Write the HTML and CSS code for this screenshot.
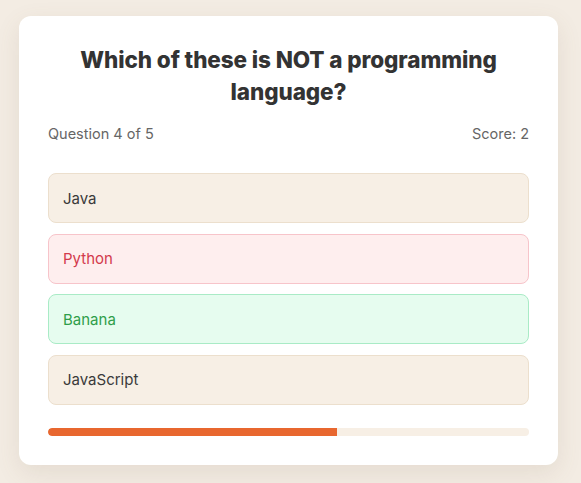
FILE: index.html
```html
<!DOCTYPE html>
<html>
<head>
<meta charset="utf-8">
<link rel="stylesheet" href="styles.css">
</head>
<body>
<div class="card">
  <h1 class="question">Which of these is NOT a programming language?</h1>
  <div class="meta">
    <span>Question 4 of 5</span>
    <span>Score: 2</span>
  </div>
  <div class="options">
    <div class="option">Java</div>
    <div class="option wrong">Python</div>
    <div class="option correct">Banana</div>
    <div class="option">JavaScript</div>
  </div>
  <div class="progress"><div class="fill" style="width:60%"></div></div>
</div>
</body>
</html>
```
FILE: styles.css
```css
html, body { margin: 0; padding: 0; }
body {
  background: #f3ece3;
  font-family: "Inter", "Noto Sans", sans-serif;
  width: 581px;
  height: 483px;
  overflow: hidden;
}
.card {
  box-sizing: border-box;
  margin: 16px 0 0 19px;
  width: 539px;
  height: 449px;
  background: #ffffff;
  border-radius: 12px;
  box-shadow: 0 8px 24px rgba(120, 100, 70, 0.12);
  padding: 28px 29px 30px;
}
.question {
  margin: 0 auto;
  font-size: 22.5px;
  line-height: 32px;
  font-weight: 800;
  color: #333333;
  text-align: center;
  letter-spacing: -0.1px;
  width: 440px;
}
.meta {
  display: flex;
  justify-content: space-between;
  margin-top: 16px;
  font-size: 14.5px;
  line-height: 20px;
  color: #666666;
}
.options {
  display: flex;
  flex-direction: column;
  gap: 10.5px;
  margin-top: 29px;
}
.option {
  box-sizing: border-box;
  height: 50px;
  display: flex;
  align-items: center;
  padding-left: 14px;
  border: 1.5px solid #ecdfcd;
  background: #f7efe5;
  border-radius: 8px;
  font-size: 15px;
  color: #3a3a3a;
}
.option.wrong {
  background: #feeeee;
  border-color: #f7c4ca;
  color: #d33a4c;
}
.option.correct {
  background: #e6fcef;
  border-color: #a9ebc6;
  color: #2f9e4a;
}
.progress {
  margin-top: 23px;
  height: 8px;
  background: #f7efe5;
  border-radius: 4px;
  overflow: hidden;
}
.fill {
  height: 100%;
  background: #e8672f;
  border-radius: 4px 0 0 4px;
}
```
